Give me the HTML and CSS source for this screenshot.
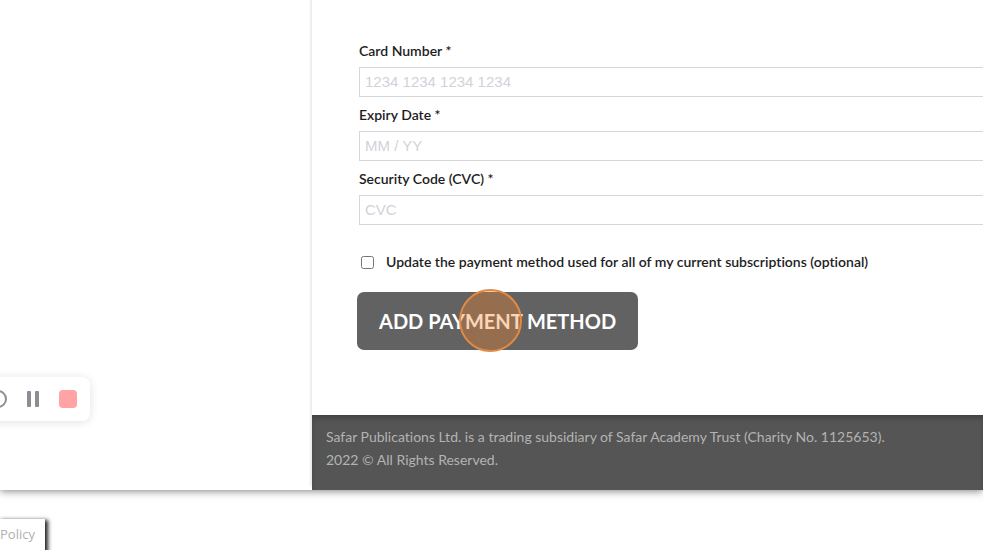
FILE: index.html
```
<!DOCTYPE html>
<html lang="en">
    <head>
        <title>Add payment method</title>
        <meta charset="utf-8">
        <meta name="viewport" content="width=device-width, initial-scale=1">
        <link rel="stylesheet" href="styles.css">
    </head>
    <body>
        <div class="page">
            <div class="page__sidebar"></div>
            <div class="page__content">
                <main class="payment">
                    <p class="payment__intro">Use a new payment method</p>
                    <form class="payment-form">
                        <div class="payment-form__field">
                            <label for="card-number">Card Number *</label>
                            <input type="text" id="card-number" placeholder="1234 1234 1234 1234">
                        </div>
                        <div class="payment-form__field">
                            <label for="card-expiry">Expiry Date *</label>
                            <input type="text" id="card-expiry" placeholder="MM / YY">
                        </div>
                        <div class="payment-form__field">
                            <label for="card-cvc">Security Code (CVC) *</label>
                            <input type="text" id="card-cvc" placeholder="CVC">
                        </div>
                        <div class="payment-form__update">
                            <input type="checkbox" id="update-all">
                            <label for="update-all">Update the payment method used for all of my current subscriptions (optional)</label>
                        </div>
                        <div class="payment-form__actions">
                            <button type="button" class="payment-form__submit">Add payment method</button>
                            <span class="click-marker"></span>
                        </div>
                    </form>
                </main>
                <footer class="footer">
                    <p>Safar Publications Ltd. is a trading subsidiary of Safar Academy Trust (Charity No. 1125653).</p>
                    <p>2022 © All Rights Reserved.</p>
                </footer>
            </div>
        </div>

        <a class="policy" href="#">Policy</a>

        <div class="recorder">
            <button type="button" class="recorder__btn" aria-label="Restart">
                <svg width="20" height="20" viewBox="0 0 20 20"><circle cx="10" cy="10" r="8" fill="none" stroke="#8b8f94" stroke-width="2"/></svg>
            </button>
            <button type="button" class="recorder__btn" aria-label="Pause">
                <svg width="20" height="20" viewBox="0 0 20 20"><rect x="4" y="2" width="4" height="16" rx="0.8" fill="#8b8f94"/><rect x="12" y="2" width="4" height="16" rx="0.8" fill="#8b8f94"/></svg>
            </button>
            <button type="button" class="recorder__btn" aria-label="Stop">
                <svg width="20" height="20" viewBox="0 0 20 20"><rect x="1" y="1" width="18" height="18" rx="4" fill="#ffa3a5"/></svg>
            </button>
        </div>
    </body>
</html>
```
FILE: styles.css
```
* {
    box-sizing: border-box;
}

body {
    margin: 0;
    overflow: hidden;
    background: #fff;
    color: #1d1d1d;
    font-family: Lato, sans-serif;
    font-size: 14px;
    font-variant-ligatures: none;
}

.page {
    display: flex;
    box-shadow: 0 1px 8px rgba(0, 0, 0, 0.5);
}

.page__sidebar {
    flex: 0 0 312px;
    background: #fff;
}

.page__content {
    flex: 1;
    min-width: 0;
    background: #fff;
    box-shadow: 0 -4px 4px rgba(0, 0, 0, 0.2);
}

.payment {
    padding: 0 0 65px 47px;
    overflow: hidden;
}

/* scrolled almost out of view */
.payment__intro {
    margin: -18px 0 36px;
    padding-left: 76px;
    font-weight: 600;
    line-height: 22px;
}

.payment-form__field {
    margin-bottom: 7px;
}

.payment-form__field label {
    display: block;
    margin-bottom: 5px;
    font-weight: 600;
    line-height: 22px;
}

.payment-form__field input {
    display: block;
    width: calc(100% + 40px);
    height: 30px;
    padding: 0 5px 2px;
    border: 1px solid #d5d7da;
    border-radius: 0;
    background: #fff;
    color: #1d1d1d;
    font-family: "Liberation Sans", Arial, sans-serif;
    font-size: 15px;
}

.payment-form__field input::placeholder {
    color: #d0d3d9;
}

.payment-form__update {
    display: flex;
    align-items: center;
    gap: 12px;
    margin-top: 26px;
    padding-left: 2px;
    font-weight: 600;
    line-height: 22px;
}

.payment-form__update input {
    width: 13px;
    height: 13px;
    margin: 0;
}

.payment-form__actions {
    position: relative;
    width: fit-content;
    margin: 19px 0 0 -2px;
}

.payment-form__submit {
    display: block;
    padding: 16px 22px;
    border: 0;
    border-radius: 7px;
    background: #626262;
    color: #fff;
    font-family: inherit;
    font-size: 20px;
    font-weight: 700;
    line-height: 26px;
    text-transform: uppercase;
}

/* click highlight over the button */
.click-marker {
    position: absolute;
    top: -3px;
    left: 102px;
    width: 63px;
    height: 63px;
    border: 2px solid #e08a45;
    border-radius: 50%;
    background: rgba(247, 134, 50, 0.35);
}

.footer {
    padding: 10px 14px 19px;
    background: #555;
    box-shadow: inset 0 4px 6px -2px rgba(0, 0, 0, 0.3);
    color: #b3b3b3;
    line-height: 23px;
}

.footer p {
    margin: 0;
}

.policy {
    display: block;
    width: fit-content;
    margin-top: 29px;
    padding: 4px 10px 10px 0;
    background: #fff;
    box-shadow: 2px 2px 4px 1px #222;
    color: #b0b0b0;
    font-family: "Open Sans", sans-serif;
    font-size: 13px;
    line-height: 22px;
    text-decoration: none;
}

/* floating recording toolbar */
.recorder {
    position: absolute;
    top: 377px;
    left: -24px;
    display: flex;
    gap: 15px;
    padding: 12px;
    border-radius: 8px;
    background: #fff;
    box-shadow: 0 1px 10px rgba(0, 0, 0, 0.12);
}

.recorder__btn {
    padding: 0;
    border: 0;
    background: none;
}

.recorder__btn svg {
    display: block;
}
```
